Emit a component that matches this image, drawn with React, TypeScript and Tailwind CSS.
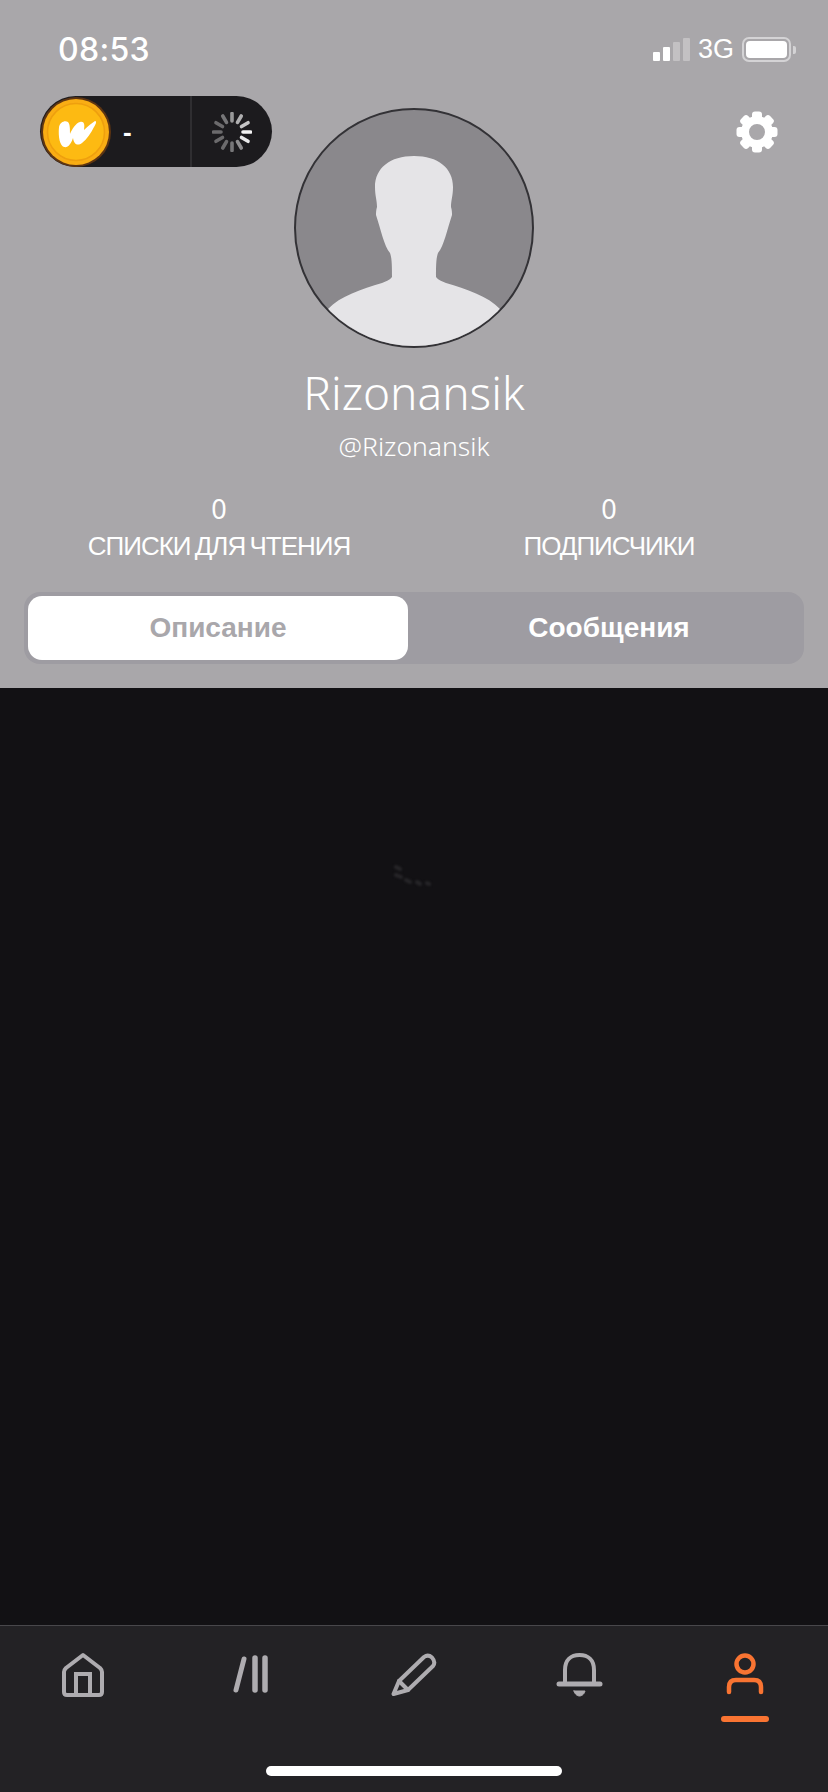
const sans = 'font-["Liberation_Sans",Arial,sans-serif]';
const soft = 'font-["Noto_Sans","Open_Sans",sans-serif]';

const StatusBar = () => (
  <div className={`flex h-[96px] items-center justify-between pt-[3px] pr-[32px] pl-[58px] text-white ${sans}`}>
    <span className='font-["Inter",sans-serif] text-[32px] leading-none font-medium tracking-[0.3px]'>08:53</span>
    <div className="flex items-center">
      <div className="flex items-end gap-[3px]">
        <span className="h-[9px] w-[7px] rounded-[1px] bg-white" />
        <span className="h-[14px] w-[7px] rounded-[1px] bg-white" />
        <span className="h-[19px] w-[7px] rounded-[1px] bg-white/30" />
        <span className="h-[23px] w-[7px] rounded-[1px] bg-white/30" />
      </div>
      <span className="ml-2 text-[27px] leading-none">3G</span>
      <div className="ml-[8px] flex items-center">
        <div className="h-[25px] w-[49px] rounded-[7px] border-2 border-white/50 p-[2px]">
          <div className="h-full w-full rounded-[4px] bg-white" />
        </div>
        <span className="ml-[2px] h-[8px] w-[3px] rounded-r-[2px] bg-white/50" />
      </div>
    </div>
  </div>
);

const Coin = () => (
  <svg width="70" height="70" viewBox="0 0 70 70" className="ml-[1px] shrink-0">
    <circle cx="35" cy="35" r="35" fill="#5e3512" />
    <circle cx="35" cy="35" r="33" fill="#f9ad14" />
    <circle cx="35" cy="35" r="28.5" fill="#fdba12" stroke="#ee9f0e" strokeWidth="1.5" />
    <path
      fill="#fff"
      d="M18 30 C19 25 24 23 27 25 C29 27 29 32 29 37 C31 32 35 26 39 25 C43 24 44 27 43 33 C47 29 51 26 54 24 C56 24 55 27 53 30 C50 36 46 42 41 46 C37 49 33 48 32 41 C30 47 27 51 23 50 C19 49 17 40 18 30Z"
    />
  </svg>
);

const spokes = [
  { a: 0, o: 0.55 },
  { a: 30, o: 0.65 },
  { a: 60, o: 0.75 },
  { a: 90, o: 0.95 },
  { a: 120, o: 0.9 },
  { a: 150, o: 0.5 },
  { a: 180, o: 0.4 },
  { a: 210, o: 0.35 },
  { a: 240, o: 0.35 },
  { a: 270, o: 0.35 },
  { a: 300, o: 0.35 },
  { a: 330, o: 0.4 },
];

const Spinner = () => (
  <svg width="40" height="40" viewBox="0 0 40 40">
    {spokes.map((s) => (
      <line
        key={s.a}
        x1="20"
        y1="1.5"
        x2="20"
        y2="9"
        stroke="#fff"
        strokeOpacity={s.o}
        strokeWidth="3.6"
        strokeLinecap="round"
        transform={`rotate(${s.a} 20 20)`}
      />
    ))}
  </svg>
);

const CoinPill = () => (
  <div className={`flex h-[71px] w-[232px] items-center rounded-full bg-[#1c1b1e] ${sans}`}>
    <Coin />
    <span className="ml-3 flex-1 text-[26px] leading-none font-bold text-white">-</span>
    <div className="flex h-full w-[82px] items-center justify-center border-l-2 border-[#2f2e31] pr-[1px]">
      <Spinner />
    </div>
  </div>
);

const Gear = () => (
  <svg width="42" height="42" viewBox="0 0 42 42" className="mt-[15px] mr-[10px] justify-self-end">
    <g fill="#fff">
      {[0, 45, 90, 135, 180, 225, 270, 315].map((a) => (
        <rect key={a} x="16" y="0.5" width="10" height="10" rx="3" transform={`rotate(${a} 21 21)`} />
      ))}
    </g>
    <circle cx="21" cy="21" r="12" fill="none" stroke="#fff" strokeWidth="8" />
  </svg>
);

const Avatar = () => (
  <div className="mt-3 h-[240px] w-[240px] overflow-hidden rounded-full border-2 border-[#333236] bg-[#8a888c]">
    <svg width="236" height="236" viewBox="2 2 236 236">
      <path
        fill="#e5e4e7"
        d="M120 48 C96 48 81 60 81 79 C81 88 83 92 83 99 C82 102 82 105 82 107 C87 122 90 138 96 145 C98 150 98 160 98 169 C96 172 92 173 88 175 C68 181 46 188 34 201 L20 250 H220 L206 201 C194 188 172 181 152 175 C148 173 144 172 142 169 C142 160 142 150 144 145 C150 138 153 122 158 107 C158 105 158 102 157 99 C157 92 159 88 159 79 C159 60 144 48 120 48Z"
      />
    </svg>
  </div>
);

const Stat = ({ label }: { label: string }) => (
  <div className="flex flex-col items-center text-white">
    <span className={`text-[27px] leading-[32px] ${soft}`}>0</span>
    <span className={`mt-1 text-[26px] leading-[34px] tracking-[-1px] [word-spacing:-2px] ${sans}`}>{label}</span>
  </div>
);

const Tabs = () => (
  <div className={`mx-6 mt-[29px] flex h-[72px] rounded-[16px] bg-[#9e9ca2] p-1 text-[28px] font-bold ${sans}`}>
    <button className="w-[380px] rounded-[14px] bg-white text-[#a9a7ab]">Описание</button>
    <button className="flex-1 pl-[10px] text-white">Сообщения</button>
  </div>
);

const Header = () => (
  <header className="bg-[#a9a7aa] pb-6">
    <StatusBar />
    <div className="grid grid-cols-[1fr_auto_1fr] items-start px-10">
      <CoinPill />
      <Avatar />
      <Gear />
    </div>
    <div className={`flex flex-col items-center text-white ${soft}`}>
      <h1 className="mt-4 text-[46px] leading-[56px] font-light">Rizonansik</h1>
      <p className="mt-[9px] text-[26.5px] leading-[34px] font-light">@Rizonansik</p>
    </div>
    <div className="mx-6 mt-[30px] grid grid-cols-2">
      <Stat label="СПИСКИ ДЛЯ ЧТЕНИЯ" />
      <Stat label="ПОДПИСЧИКИ" />
    </div>
    <Tabs />
  </header>
);

// faint loader that barely shows on the dark panel
const FaintLoader = () => (
  <svg width="46" height="26" viewBox="0 0 46 26" className="blur-[1px]">
    <g stroke="#262528" strokeWidth="4" strokeLinecap="round">
      <line x1="5" y1="3" x2="9" y2="5" />
      <line x1="5" y1="11" x2="10" y2="13" />
      <line x1="15" y1="16" x2="19" y2="18" />
      <line x1="26" y1="18" x2="29" y2="20" />
      <line x1="36" y1="19" x2="38" y2="20" />
    </g>
  </svg>
);

const stroke = {
  fill: 'none',
  stroke: '#aeacb0',
  strokeWidth: 4,
  strokeLinecap: 'round' as const,
  strokeLinejoin: 'round' as const,
};

const HomeIcon = () => (
  <svg width="48" height="48" viewBox="0 0 48 48" {...stroke}>
    <path d="M24 3 L41 16 Q43 18 43 20 V40 Q43 43 40 43 H8 Q5 43 5 40 V20 Q5 18 7 16 Z" />
    <path d="M17 43 V22 H31 V43" strokeLinejoin="miter" />
  </svg>
);

const ListsIcon = () => (
  <svg width="48" height="48" viewBox="0 0 48 48" {...stroke} strokeWidth="5">
    <path d="M20 7 L12 38" />
    <path d="M31 6 V38" strokeWidth="5.5" />
    <path d="M41 6 V38" strokeWidth="5.5" />
  </svg>
);

const PencilIcon = () => (
  <svg width="48" height="48" viewBox="0 0 48 48" {...stroke}>
    <path d="M3.5 42 L9 29 L34 5 Q38 2 42 5.5 Q46 10 43 14 L18 38 Z" />
    <path d="M9 29 L18 38" />
  </svg>
);

const BellIcon = () => (
  <svg width="48" height="48" viewBox="0 0 48 48" {...stroke}>
    <path d="M9 32 V18 C9 8 15 3 23.5 3 C32 3 38 8 38 18 V32" />
    <path d="M3 32 H44" strokeWidth="5" />
    <path d="M18 39 H29 C28 43 25 44 23.5 44 C22 44 19 43 18 39 Z" fill="#aeacb0" strokeWidth="1" />
  </svg>
);

const PersonIcon = () => (
  <svg width="48" height="48" viewBox="0 0 48 48" fill="none" stroke="#f97432" strokeWidth="4.5" strokeLinecap="round">
    <circle cx="24" cy="12" r="8.5" />
    <path d="M8 40 V35 Q8 28 15 28 H33 Q40 28 40 35 V40" />
  </svg>
);

const BottomNav = () => (
  <nav className="border-t border-[#48474b] bg-[#232225]">
    <div className="grid h-[98px] grid-cols-5 justify-items-center pt-[26px]">
      <HomeIcon />
      <ListsIcon />
      <PencilIcon />
      <BellIcon />
      <div className="flex flex-col items-center">
        <PersonIcon />
        <span className="mt-[16px] h-[6px] w-[48px] rounded-[3px] bg-[#f97432]" />
      </div>
    </div>
    <div className="flex h-[68px] justify-center pt-[42px]">
      <span className="h-[10px] w-[296px] rounded-full bg-white" />
    </div>
  </nav>
);

export default function App() {
  return (
    <div className="flex h-[1792px] w-[828px] flex-col overflow-hidden">
      <Header />
      <main className="flex flex-1 justify-center bg-[#121114] pt-[176px]">
        <FaintLoader />
      </main>
      <BottomNav />
    </div>
  );
}
